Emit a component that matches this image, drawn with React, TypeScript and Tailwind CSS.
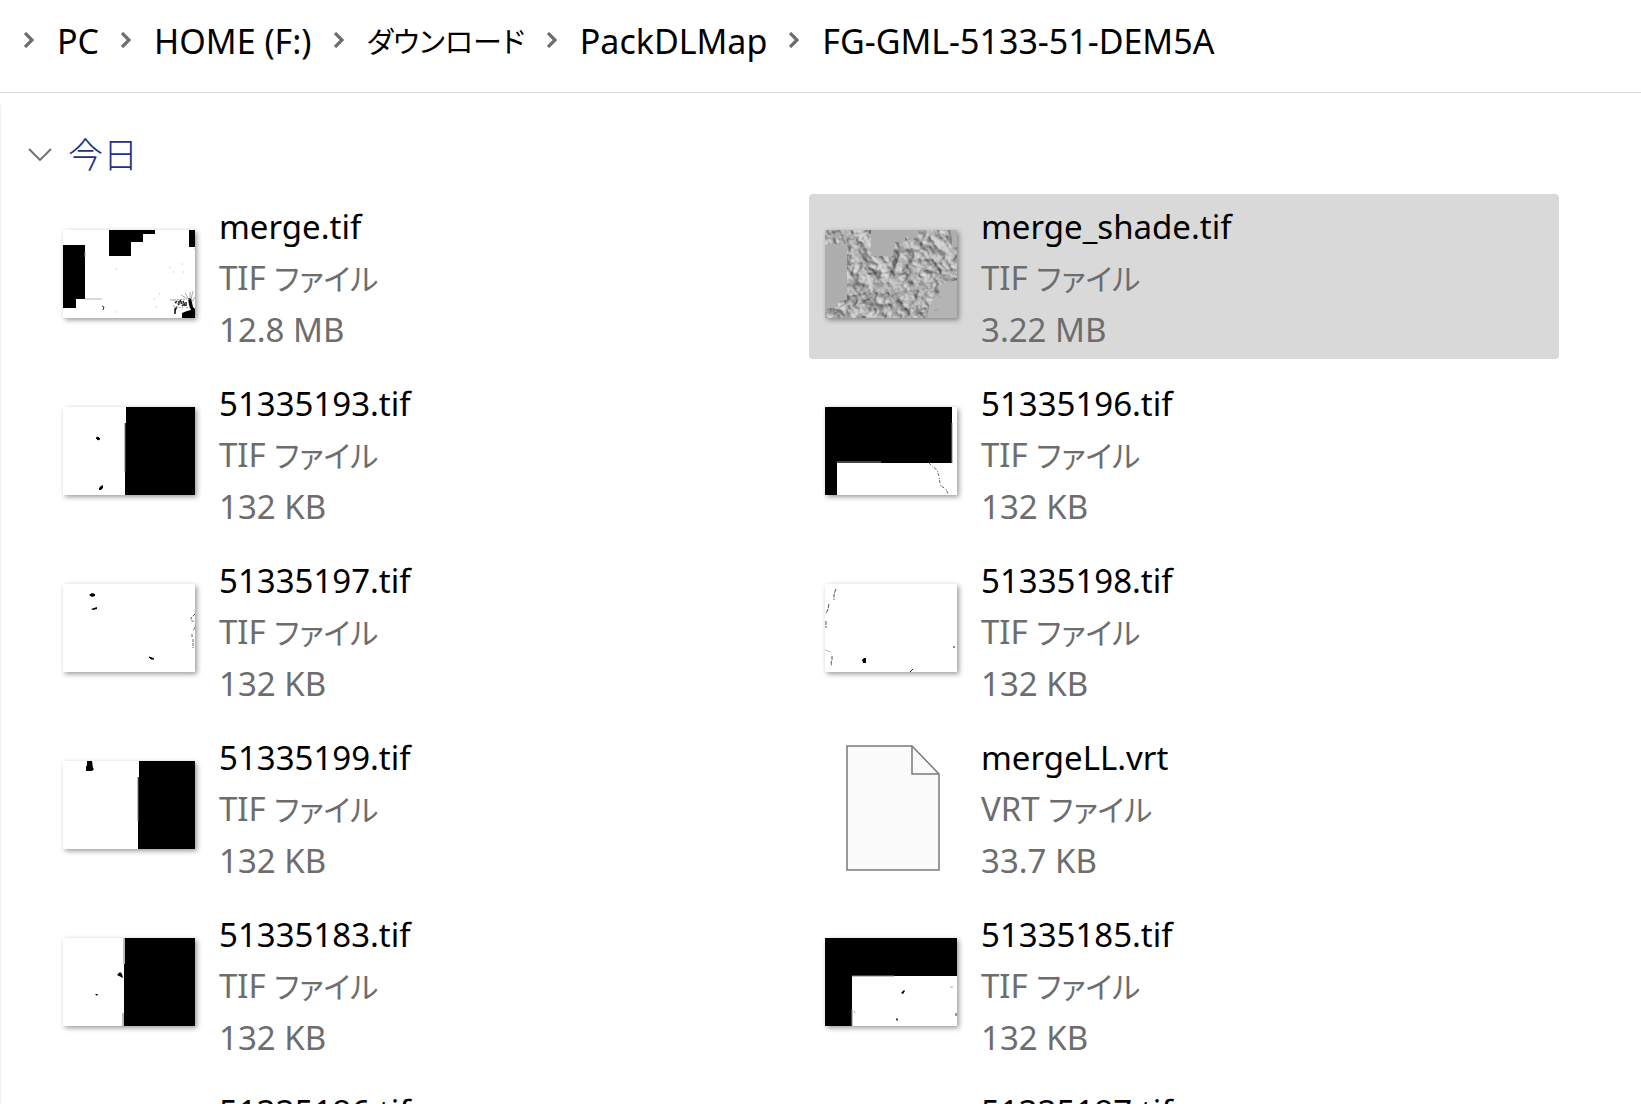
import React from "react";
import clsx from "clsx";

interface FileEntry {
    name: string;
    kind: string;
    size: string;
    preview: React.ReactNode;
    isDocument?: boolean;
    selected?: boolean;
}

const path = ["PC", "HOME (F:)", "ダウンロード", "PackDLMap", "FG-GML-5133-51-DEM5A"];

const MergePreview = () => (
    <>
        <path d="M0 15H22V69H13V78H0Z" />
        <path d="M46 0H92V4H80V12H68V26H46Z" />
        <path d="M126 0H132V17H126Z" />
        <path d="M22 69H39" stroke="#b5b5b5" />
        <path d="M22 22V27" stroke="#999" />
        <path d="M39 76L41 77L40 80" fill="none" stroke="#333" />
        <path d="M119 88V83L124 81L128 80L126 75L125 68H128L130 77L132 79V88Z" />
        <path
            d="M112 73L114 71M117 70L119 74M120 71L122 76M115 75L117 73M123 72V76M114 77L112 79V84M119 76L121 74M116 71V74"
            stroke="#222"
            strokeWidth="1.6"
        />
        <path
            d="M111 70L124 69M113 73L123 74M110 76L120 78M123 78L127 77"
            stroke="#999"
            strokeDasharray="2 1"
        />
        <path
            d="M126 70L122 63M127 69L127 62M128 69L130 61M129 72L132 67M123 68L118 65M112 70L107 70"
            stroke="#aaa"
        />
        <path
            d="M53 39h1M106 38h1M110 42h1M119 34h1M120 42h1M96 64h1M91 69h1M93 77h1M53 82h1M131 19h1"
            stroke="#bbb"
        />
    </>
);

// Relief shading: noise lit from the north-west, with the no-data tiles left flat
const ShadePreview = () => (
    <>
        <filter id="relief" x="0" y="0" width="100%" height="100%" colorInterpolationFilters="sRGB">
            <feTurbulence type="turbulence" baseFrequency="0.05 0.08" numOctaves="5" seed="21" />
            <feDiffuseLighting surfaceScale="3" diffuseConstant="1" lightingColor="#dedede">
                <feDistantLight azimuth="180" elevation="54" />
            </feDiffuseLighting>
        </filter>
        <rect width="132" height="88" fill="#b2b2b2" />
        <g transform="rotate(-35 66 44)">
            <rect x="-20" y="-50" width="172" height="188" filter="url(#relief)" />
        </g>
        <path d="M0 15L8 13L14 15L22 14V70L13 71V77L6 78L0 80Z" fill="#aeaeae" />
        <path d="M46 0H92V5L87 9L80 6V12H70L68 26H46Z" fill="#aeaeae" />
        <path d="M126 0H132V17L127 18Z" fill="#aeaeae" />
        <path d="M132 50L121 53L113 55L115 62L109 68L104 76L102 88H132Z" fill="#b4b4b4" />
        <path d="M67 88L69 78L65 68L68 60L64 52" fill="none" stroke="#a5a5a5" strokeWidth="2" />
        <path d="M113 65L117 68M109 81L113 79" stroke="#9d9d9d" />
    </>
);

const DocumentIcon = () => (
    <svg viewBox="0 0 94 126" className="h-[126px] w-[94px]" aria-hidden="true">
        <path d="M1 1H66L93 29V125H1Z" fill="#fafafa" stroke="#7a7a78" strokeWidth="1.5" />
        <path d="M66 1V29H93" fill="none" stroke="#7a7a78" strokeWidth="1.5" />
    </svg>
);

const files: FileEntry[] = [
    { name: "merge.tif", kind: "TIF", size: "12.8 MB", preview: <MergePreview /> },
    { name: "merge_shade.tif", kind: "TIF", size: "3.22 MB", preview: <ShadePreview />, selected: true },
    {
        name: "51335193.tif",
        kind: "TIF",
        size: "132 KB",
        preview: (
            <>
                <path d="M63 0H132V88H62V16H63Z" />
                <path d="M62 16V65" stroke="#777" />
                <path d="M33 31L35 30L37 32L35 33Z" stroke="#000" />
                <path d="M36 81L38 79L40 78V81L38 83H36Z" />
            </>
        ),
    },
    {
        name: "51335196.tif",
        kind: "TIF",
        size: "132 KB",
        preview: (
            <>
                <path d="M0 0H127V56H12V88H0Z" />
                <path d="M127 16V56M12 55H56" stroke="#888" />
                <path
                    d="M104 56L108 60L112 63L114 69L115 76L116 79L121 82L123 87"
                    fill="none"
                    stroke="#666"
                    strokeDasharray="3 2 1 1"
                />
            </>
        ),
    },
    {
        name: "51335197.tif",
        kind: "TIF",
        size: "132 KB",
        preview: (
            <>
                <path d="M26 11L29 9L32 10V12L29 13Z" />
                <path d="M28 25L34 23V25L30 26Z" />
                <path d="M86 73L89 74L91 75L88 75Z" stroke="#000" />
                <path
                    d="M132 30L128 34V36L131 38M132 43L130 47M129 50V53M130 55L130 64"
                    fill="none"
                    stroke="#666"
                    strokeDasharray="3 1"
                />
            </>
        ),
    },
    {
        name: "51335198.tif",
        kind: "TIF",
        size: "132 KB",
        preview: (
            <>
                <path d="M37 76L39 74H41V79H38Z" />
                <path
                    d="M11 5L9 10V16M4 20L3 25L1 30M1 37V44M7 72V76L6 79L7 82"
                    fill="none"
                    stroke="#555"
                    strokeDasharray="4 1"
                />
                <path d="M0 66L6 68" stroke="#bbb" />
                <path d="M128 63H130M85 88L88 85" stroke="#222" />
            </>
        ),
    },
    {
        name: "51335199.tif",
        kind: "TIF",
        size: "132 KB",
        preview: (
            <>
                <path d="M76 0H132V88H75V16H76Z" />
                <path d="M75 16V60" stroke="#777" />
                <path d="M24 0H29L30 7L31 8L29 10H23V6L24 4Z" />
            </>
        ),
    },
    { name: "mergeLL.vrt", kind: "VRT", size: "33.7 KB", preview: <DocumentIcon />, isDocument: true },
    {
        name: "51335183.tif",
        kind: "TIF",
        size: "132 KB",
        preview: (
            <>
                <path d="M62 0H132V88H61V26H62Z" />
                <path d="M61 0V26M60 75V88" stroke="#777" />
                <path d="M54 37L57 34L59 36L60 40Z" />
                <path d="M32 56H35L34 58Z" />
            </>
        ),
    },
    {
        name: "51335185.tif",
        kind: "TIF",
        size: "132 KB",
        preview: (
            <>
                <path d="M0 0H132V38H27V88H0Z" />
                <path d="M27 38H69M27 71V88" stroke="#888" />
                <path d="M76 55L79 52L80 53L78 56Z" />
                <path d="M71 81L72 80L73 82L72 83Z" />
                <path d="M125 49H128M29 73L30 75" stroke="#aaa" />
                <path d="M131 75V78" stroke="#333" />
            </>
        ),
    },
    { name: "51335186.tif", kind: "TIF", size: "132 KB", preview: <path d="M0 0H60V88H0Z" /> },
    { name: "51335187.tif", kind: "TIF", size: "132 KB", preview: <path d="M20 30L24 28V32Z" /> },
];

const PathArrow = () => (
    <svg viewBox="0 0 10 16" className="mb-1 h-4 w-2.5 shrink-0" aria-hidden="true">
        <path d="M1 1L8 8L1 15" fill="none" stroke="#6d6d6d" strokeWidth="3.2" />
    </svg>
);

const Breadcrumb = () => (
    <nav className="border-b border-[#d9d9d9] pt-4 pb-[25px] pl-6" aria-label="Path">
        <ol className="flex items-center gap-[22px] text-[34px] leading-[51px]">
            {path.map((part) => (
                <li key={part} className="flex items-center gap-[23px]">
                    <PathArrow />
                    <a href="#" className={clsx("whitespace-nowrap", part === "ダウンロード" && "text-[29px]")}>
                        {part}
                    </a>
                </li>
            ))}
        </ol>
    </nav>
);

const FileTile = ({ file }: { file: FileEntry }) => (
    <button
        type="button"
        aria-pressed={!!file.selected}
        className={clsx(
            "flex h-[165px] w-full items-center gap-6 rounded-sm pl-4 text-left",
            file.selected && "bg-[#d9d9d9]"
        )}
    >
        {file.isDocument ? (
            <span className="flex w-[132px] shrink-0 justify-center pl-1">{file.preview}</span>
        ) : (
            <svg
                viewBox="0 0 132 88"
                className="mb-[5px] h-[88px] w-[132px] shrink-0 bg-white shadow-[2px_2px_5px_rgba(0,0,0,0.4)]"
                aria-hidden="true"
            >
                {file.preview}
            </svg>
        )}
        <span className="flex min-w-0 flex-col pt-0.5 leading-[51px] whitespace-nowrap text-[#6d6d6d]">
            <span className="text-black">{file.name}</span>
            <span>
                {file.kind} <span className="text-[30px]">ファイル</span>
            </span>
            <span>{file.size}</span>
        </span>
    </button>
);

export default function App() {
    return (
        <div className="flex h-screen flex-col overflow-hidden bg-white font-['Noto_Sans','Noto_Sans_CJK_JP',sans-serif] text-[33px] text-black [font-feature-settings:'palt']">
            <Breadcrumb />
            <main className="mt-3 min-h-0 flex-1 overflow-hidden border-l border-[#f0f0f0] pt-6">
                <h2>
                    <button type="button" className="flex items-center gap-4 pl-[27px] text-[#1e3287]">
                        <svg viewBox="0 0 24 14" className="h-3.5 w-6" aria-hidden="true">
                            <path d="M1 1L12 12L23 1" fill="none" stroke="#6d6d6d" strokeWidth="1.8" />
                        </svg>
                        <span className="text-[35px] leading-[51px] font-light">今日</span>
                    </button>
                </h2>
                <ul className="mt-[14px] grid grid-cols-2 gap-3 pr-[82px] pl-[46px]">
                    {files.map((file) => (
                        <li key={file.name}>
                            <FileTile file={file} />
                        </li>
                    ))}
                </ul>
            </main>
        </div>
    );
}
